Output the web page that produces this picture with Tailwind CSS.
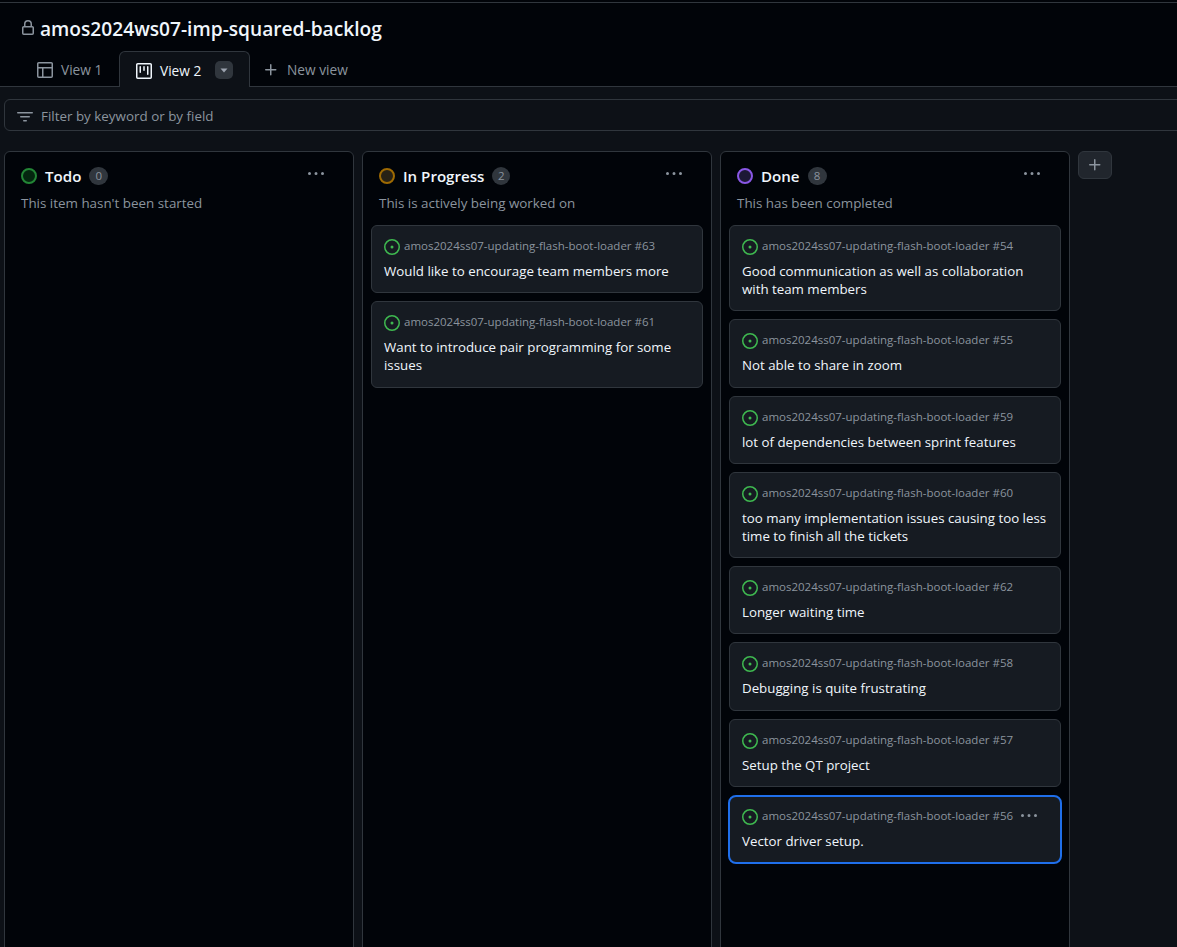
<!DOCTYPE html>
<html>
<head>
<meta charset="utf-8">
<script src="https://cdn.jsdelivr.net/npm/@tailwindcss/browser@4"></script>
</head>
<body class="m-0 bg-[#0d1117] font-['Open_Sans','Noto_Sans',sans-serif] overflow-hidden">
<div class="w-[1177px] h-[947px] overflow-hidden flex flex-col">
  <div class="bg-[#010409] h-[87px] shrink-0 flex flex-col border-b border-[#30363d] relative">
    <div class="h-[3px] shrink-0 border-b border-[#30363d] mt-0"></div>
    <div class="h-[48px] shrink-0 flex items-center pl-[20px] pt-[4px]">
      <svg width="16" height="16" viewBox="0 0 16 16" fill="#8b949e" class="mr-[4px] -mt-[2px]"><path d="M4 4a4 4 0 0 1 8 0v2h.25c.966 0 1.75.784 1.75 1.75v5.5A1.75 1.75 0 0 1 12.25 15h-8.5A1.75 1.75 0 0 1 2 13.25v-5.5C2 6.784 2.784 6 3.75 6H4Zm8.25 3.5h-8.5a.25.25 0 0 0-.25.25v5.5c0 .138.112.25.25.25h8.5a.25.25 0 0 0 .25-.25v-5.5a.25.25 0 0 0-.25-.25ZM10.5 6V4a2.5 2.5 0 1 0-5 0v2Z"/></svg>
      <h1 class="text-[19.15px] leading-[26px] font-semibold text-[#f0f6fc]">amos2024ws07-imp-squared-backlog</h1>
    </div>
    <div class="flex items-end pl-[20px] h-[35px] shrink-0">
      <div class="flex items-center h-[35px] w-[99px] pl-[17px] pt-[3px] text-[13.7px] text-[#8b949e] gap-[8px]">
        <svg width="16" height="16" viewBox="0 0 16 16" fill="#8b949e"><path d="M0 1.75C0 .784.784 0 1.75 0h12.5C15.216 0 16 .784 16 1.75v12.5A1.75 1.75 0 0 1 14.25 16H1.75A1.75 1.75 0 0 1 0 14.25ZM6.5 6.5v8h7.75a.25.25 0 0 0 .25-.25V6.5Zm8-1.5V1.75a.25.25 0 0 0-.25-.25H1.75a.25.25 0 0 0-.25.25V5Zm-13 1.5v7.75c0 .138.112.25.25.25H5v-8Z"/></svg>
        <span>View 1</span>
      </div>
      <div class="relative flex items-center h-[36px] w-[131px] -mb-[1px] pl-[16px] pt-[3px] gap-[8px] text-[13.7px] font-normal text-[#f0f6fc] bg-[#0d1117] border border-[#30363d] border-b-0 rounded-t-[6px]">
        <svg width="16" height="16" viewBox="0 0 16 16" fill="#f0f6fc"><path d="M1.75 0h12.5C15.216 0 16 .784 16 1.75v12.5A1.75 1.75 0 0 1 14.25 16H1.75A1.75 1.75 0 0 1 0 14.25V1.75C0 .784.784 0 1.75 0ZM1.5 1.75v12.5c0 .138.112.25.25.25h12.5a.25.25 0 0 0 .25-.25V1.75a.25.25 0 0 0-.25-.25H1.75a.25.25 0 0 0-.25.25ZM11.75 3a.75.75 0 0 1 .75.75v7.5a.75.75 0 0 1-1.5 0v-7.5a.75.75 0 0 1 .75-.75Zm-8.25.75a.75.75 0 0 1 1.5 0v5.5a.75.75 0 0 1-1.5 0ZM8 3a.75.75 0 0 1 .75.75v3.5a.75.75 0 0 1-1.5 0v-3.5A.75.75 0 0 1 8 3Z"/></svg>
        <span>View 2</span>
        <span class="ml-[6px] -mt-[2px] w-[18px] h-[18px] rounded-[5px] bg-[#30363d] flex items-center justify-center">
          <svg width="8" height="5" viewBox="0 0 8 5"><path d="M0.5 0.5h7L4 4.5z" fill="#9ca3af"/></svg>
        </span>
      </div>
      <div class="flex items-center h-[35px] pl-[13px] pt-[3px] gap-[8px] text-[13.7px] text-[#8b949e]">
        <svg width="16" height="16" viewBox="0 0 16 16" fill="#8b949e"><path d="M7.75 2a.75.75 0 0 1 .75.75V7h4.25a.75.75 0 0 1 0 1.5H8.5v4.25a.75.75 0 0 1-1.5 0V8.5H2.75a.75.75 0 0 1 0-1.5H7V2.75A.75.75 0 0 1 7.75 2Z"/></svg>
        <span>New view</span>
      </div>
    </div>
  </div>

  <div class="h-[64px] shrink-0 pl-[4px] pt-[12px]">
    <div class="h-[32px] w-[1190px] bg-[#0d1117] border border-[#30363d] rounded-[6px] flex items-center pl-[12px] pt-[2px] gap-[8px] text-[13.4px] text-[#8b949e]">
      <svg width="16" height="16" viewBox="0 0 16 16" fill="#8b949e" class="mt-[1px]"><path d="M.75 3h14.5a.75.75 0 0 1 0 1.5H.75a.75.75 0 0 1 0-1.5ZM3 7.75A.75.75 0 0 1 3.75 7h8.5a.75.75 0 0 1 0 1.5h-8.5A.75.75 0 0 1 3 7.75Zm3 4a.75.75 0 0 1 .75-.75h2.5a.75.75 0 0 1 0 1.5h-2.5a.75.75 0 0 1-.75-.75Z"/></svg>
      <span>Filter by keyword or by field</span>
    </div>
  </div>

  <div class="flex-1 flex gap-[8px] pl-[4px] items-start">
    <!-- Todo -->
    <section class="w-[350px] h-[820px] shrink-0 bg-[#010409] border border-[#30363d] rounded-t-[6px]">
      <header class="h-[73px] pl-[16px] pr-[16px] pt-[12px] relative">
        <div class="flex items-center h-[24px]">
          <span class="w-[16px] h-[16px] rounded-full border-2 border-[#238636] bg-[#04260f]"></span>
          <span class="ml-[8px] text-[15.1px] font-semibold text-[#f0f6fc]">Todo</span>
          <span class="ml-[8px] w-[19px] h-[18px] rounded-full bg-[#30363d] text-[11.5px] leading-[18px] text-center text-[#8b949e]">0</span>
        </div>
        <p class="mt-[5px] text-[13.4px] leading-[20px] text-[#8b949e]">This item hasn't been started</p>
        <svg class="absolute right-[29px] top-[14px]" width="16" height="16" viewBox="0 0 16 16" fill="#8b949e"><path d="M8 9a1.5 1.5 0 1 0 0-3 1.5 1.5 0 0 0 0 3ZM1.5 9a1.5 1.5 0 1 0 0-3 1.5 1.5 0 0 0 0 3Zm13 0a1.5 1.5 0 1 0 0-3 1.5 1.5 0 0 0 0 3Z"/></svg>
      </header>
    </section>

    <!-- In Progress -->
    <section class="w-[350px] h-[820px] shrink-0 bg-[#010409] border border-[#30363d] rounded-t-[6px]">
      <header class="h-[73px] pl-[16px] pr-[16px] pt-[12px] relative">
        <div class="flex items-center h-[24px]">
          <span class="w-[16px] h-[16px] rounded-full border-2 border-[#9e6a03] bg-[#272115]"></span>
          <span class="ml-[8px] text-[15.1px] font-semibold text-[#f0f6fc]">In Progress</span>
          <span class="ml-[8px] w-[18px] h-[18px] rounded-full bg-[#30363d] text-[11.5px] leading-[18px] text-center text-[#8b949e]">2</span>
        </div>
        <p class="mt-[5px] text-[13.4px] leading-[20px] text-[#8b949e]">This is actively being worked on</p>
        <svg class="absolute right-[29px] top-[14px]" width="16" height="16" viewBox="0 0 16 16" fill="#8b949e"><path d="M8 9a1.5 1.5 0 1 0 0-3 1.5 1.5 0 0 0 0 3ZM1.5 9a1.5 1.5 0 1 0 0-3 1.5 1.5 0 0 0 0 3Zm13 0a1.5 1.5 0 1 0 0-3 1.5 1.5 0 0 0 0 3Z"/></svg>
      </header>
      <div class="flex flex-col gap-[8px] px-[8px]">
        <article class="h-[68px] rounded-[6px] bg-[#161b22] border border-[#30363d] pl-[12px] pr-[8px] pt-[11px]">
          <div class="flex items-center h-[20px] gap-[4px] text-[11.5px] text-[#8b949e]">
            <svg width="16" height="16" viewBox="0 0 16 16" fill="#3fb950"><path d="M8 9.5a1.5 1.5 0 1 0 0-3 1.5 1.5 0 0 0 0 3Z"/><path d="M8 0a8 8 0 1 1 0 16A8 8 0 0 1 8 0ZM1.5 8a6.5 6.5 0 1 0 13 0 6.5 6.5 0 0 0-13 0Z"/></svg>
            <span class="-mt-[3px]">amos2024ss07-updating-flash-boot-loader #63</span>
          </div>
          <p class="mt-[5px] text-[13.3px] leading-[18px] text-[#f0f6fc]">Would like to encourage team members more</p>
        </article>
        <article class="h-[87px] rounded-[6px] bg-[#161b22] border border-[#30363d] pl-[12px] pr-[8px] pt-[11px]">
          <div class="flex items-center h-[20px] gap-[4px] text-[11.5px] text-[#8b949e]">
            <svg width="16" height="16" viewBox="0 0 16 16" fill="#3fb950"><path d="M8 9.5a1.5 1.5 0 1 0 0-3 1.5 1.5 0 0 0 0 3Z"/><path d="M8 0a8 8 0 1 1 0 16A8 8 0 0 1 8 0ZM1.5 8a6.5 6.5 0 1 0 13 0 6.5 6.5 0 0 0-13 0Z"/></svg>
            <span class="-mt-[3px]">amos2024ss07-updating-flash-boot-loader #61</span>
          </div>
          <p class="mt-[5px] text-[13.3px] leading-[18px] text-[#f0f6fc]">Want to introduce pair programming for some issues</p>
        </article>
      </div>
    </section>

    <!-- Done -->
    <section class="w-[350px] h-[820px] shrink-0 bg-[#010409] border border-[#30363d] rounded-t-[6px]">
      <header class="h-[73px] pl-[16px] pr-[16px] pt-[12px] relative">
        <div class="flex items-center h-[24px]">
          <span class="w-[16px] h-[16px] rounded-full border-2 border-[#8957e5] bg-[#1d1836]"></span>
          <span class="ml-[8px] text-[15.1px] font-semibold text-[#f0f6fc]">Done</span>
          <span class="ml-[8px] w-[19px] h-[18px] rounded-full bg-[#30363d] text-[11.5px] leading-[18px] text-center text-[#8b949e]">8</span>
        </div>
        <p class="mt-[5px] text-[13.4px] leading-[20px] text-[#8b949e]">This has been completed</p>
        <svg class="absolute right-[29px] top-[14px]" width="16" height="16" viewBox="0 0 16 16" fill="#8b949e"><path d="M8 9a1.5 1.5 0 1 0 0-3 1.5 1.5 0 0 0 0 3ZM1.5 9a1.5 1.5 0 1 0 0-3 1.5 1.5 0 0 0 0 3Zm13 0a1.5 1.5 0 1 0 0-3 1.5 1.5 0 0 0 0 3Z"/></svg>
      </header>
      <div class="flex flex-col gap-[8px] px-[8px]">
        <article class="h-[86px] rounded-[6px] bg-[#161b22] border border-[#30363d] pl-[12px] pr-[8px] pt-[11px]">
          <div class="flex items-center h-[20px] gap-[4px] text-[11.5px] text-[#8b949e]">
            <svg width="16" height="16" viewBox="0 0 16 16" fill="#3fb950"><path d="M8 9.5a1.5 1.5 0 1 0 0-3 1.5 1.5 0 0 0 0 3Z"/><path d="M8 0a8 8 0 1 1 0 16A8 8 0 0 1 8 0ZM1.5 8a6.5 6.5 0 1 0 13 0 6.5 6.5 0 0 0-13 0Z"/></svg>
            <span class="-mt-[3px]">amos2024ss07-updating-flash-boot-loader #54</span>
          </div>
          <p class="mt-[5px] text-[13.3px] leading-[18px] text-[#f0f6fc]">Good communication as well as collaboration with team members</p>
        </article>
        <article class="h-[69px] rounded-[6px] bg-[#161b22] border border-[#30363d] pl-[12px] pr-[8px] pt-[11px]">
          <div class="flex items-center h-[20px] gap-[4px] text-[11.5px] text-[#8b949e]">
            <svg width="16" height="16" viewBox="0 0 16 16" fill="#3fb950"><path d="M8 9.5a1.5 1.5 0 1 0 0-3 1.5 1.5 0 0 0 0 3Z"/><path d="M8 0a8 8 0 1 1 0 16A8 8 0 0 1 8 0ZM1.5 8a6.5 6.5 0 1 0 13 0 6.5 6.5 0 0 0-13 0Z"/></svg>
            <span class="-mt-[3px]">amos2024ss07-updating-flash-boot-loader #55</span>
          </div>
          <p class="mt-[5px] text-[13.3px] leading-[18px] text-[#f0f6fc]">Not able to share in zoom</p>
        </article>
        <article class="h-[68px] rounded-[6px] bg-[#161b22] border border-[#30363d] pl-[12px] pr-[8px] pt-[11px]">
          <div class="flex items-center h-[20px] gap-[4px] text-[11.5px] text-[#8b949e]">
            <svg width="16" height="16" viewBox="0 0 16 16" fill="#3fb950"><path d="M8 9.5a1.5 1.5 0 1 0 0-3 1.5 1.5 0 0 0 0 3Z"/><path d="M8 0a8 8 0 1 1 0 16A8 8 0 0 1 8 0ZM1.5 8a6.5 6.5 0 1 0 13 0 6.5 6.5 0 0 0-13 0Z"/></svg>
            <span class="-mt-[3px]">amos2024ss07-updating-flash-boot-loader #59</span>
          </div>
          <p class="mt-[5px] text-[13.3px] leading-[18px] text-[#f0f6fc]">lot of dependencies between sprint features</p>
        </article>
        <article class="h-[86px] rounded-[6px] bg-[#161b22] border border-[#30363d] pl-[12px] pr-[8px] pt-[11px]">
          <div class="flex items-center h-[20px] gap-[4px] text-[11.5px] text-[#8b949e]">
            <svg width="16" height="16" viewBox="0 0 16 16" fill="#3fb950"><path d="M8 9.5a1.5 1.5 0 1 0 0-3 1.5 1.5 0 0 0 0 3Z"/><path d="M8 0a8 8 0 1 1 0 16A8 8 0 0 1 8 0ZM1.5 8a6.5 6.5 0 1 0 13 0 6.5 6.5 0 0 0-13 0Z"/></svg>
            <span class="-mt-[3px]">amos2024ss07-updating-flash-boot-loader #60</span>
          </div>
          <p class="mt-[5px] text-[13.3px] leading-[18px] text-[#f0f6fc]">too many implementation issues causing too less time to finish all the tickets</p>
        </article>
        <article class="h-[68px] rounded-[6px] bg-[#161b22] border border-[#30363d] pl-[12px] pr-[8px] pt-[11px]">
          <div class="flex items-center h-[20px] gap-[4px] text-[11.5px] text-[#8b949e]">
            <svg width="16" height="16" viewBox="0 0 16 16" fill="#3fb950"><path d="M8 9.5a1.5 1.5 0 1 0 0-3 1.5 1.5 0 0 0 0 3Z"/><path d="M8 0a8 8 0 1 1 0 16A8 8 0 0 1 8 0ZM1.5 8a6.5 6.5 0 1 0 13 0 6.5 6.5 0 0 0-13 0Z"/></svg>
            <span class="-mt-[3px]">amos2024ss07-updating-flash-boot-loader #62</span>
          </div>
          <p class="mt-[5px] text-[13.3px] leading-[18px] text-[#f0f6fc]">Longer waiting time</p>
        </article>
        <article class="h-[69px] rounded-[6px] bg-[#161b22] border border-[#30363d] pl-[12px] pr-[8px] pt-[11px]">
          <div class="flex items-center h-[20px] gap-[4px] text-[11.5px] text-[#8b949e]">
            <svg width="16" height="16" viewBox="0 0 16 16" fill="#3fb950"><path d="M8 9.5a1.5 1.5 0 1 0 0-3 1.5 1.5 0 0 0 0 3Z"/><path d="M8 0a8 8 0 1 1 0 16A8 8 0 0 1 8 0ZM1.5 8a6.5 6.5 0 1 0 13 0 6.5 6.5 0 0 0-13 0Z"/></svg>
            <span class="-mt-[3px]">amos2024ss07-updating-flash-boot-loader #58</span>
          </div>
          <p class="mt-[5px] text-[13.3px] leading-[18px] text-[#f0f6fc]">Debugging is quite frustrating</p>
        </article>
        <article class="h-[68px] rounded-[6px] bg-[#161b22] border border-[#30363d] pl-[12px] pr-[8px] pt-[11px]">
          <div class="flex items-center h-[20px] gap-[4px] text-[11.5px] text-[#8b949e]">
            <svg width="16" height="16" viewBox="0 0 16 16" fill="#3fb950"><path d="M8 9.5a1.5 1.5 0 1 0 0-3 1.5 1.5 0 0 0 0 3Z"/><path d="M8 0a8 8 0 1 1 0 16A8 8 0 0 1 8 0ZM1.5 8a6.5 6.5 0 1 0 13 0 6.5 6.5 0 0 0-13 0Z"/></svg>
            <span class="-mt-[3px]">amos2024ss07-updating-flash-boot-loader #57</span>
          </div>
          <p class="mt-[5px] text-[13.3px] leading-[18px] text-[#f0f6fc]">Setup the QT project</p>
        </article>
        <article class="h-[69px] -mx-[1px] rounded-[8px] bg-[#161b22] border-2 border-[#1f6feb] pl-[12px] pr-[8px] pt-[10px]">
          <div class="flex items-center h-[20px] gap-[4px] text-[11.5px] text-[#8b949e]">
            <svg width="16" height="16" viewBox="0 0 16 16" fill="#3fb950"><path d="M8 9.5a1.5 1.5 0 1 0 0-3 1.5 1.5 0 0 0 0 3Z"/><path d="M8 0a8 8 0 1 1 0 16A8 8 0 0 1 8 0ZM1.5 8a6.5 6.5 0 1 0 13 0 6.5 6.5 0 0 0-13 0Z"/></svg>
            <span class="-mt-[3px]">amos2024ss07-updating-flash-boot-loader #56</span>
            <svg class="ml-[4px] -mt-[3px]" width="16" height="16" viewBox="0 0 16 16" fill="#8b949e"><path d="M8 9a1.5 1.5 0 1 0 0-3 1.5 1.5 0 0 0 0 3ZM1.5 9a1.5 1.5 0 1 0 0-3 1.5 1.5 0 0 0 0 3Zm13 0a1.5 1.5 0 1 0 0-3 1.5 1.5 0 0 0 0 3Z"/></svg>
          </div>
          <p class="mt-[5px] text-[13.3px] leading-[18px] text-[#f0f6fc]">Vector driver setup.</p>
        </article>
      </div>
    </section>

    <div class="w-[34px] h-[28px] shrink-0 rounded-[6px] bg-[#21262d] border border-[#30363d] flex items-center justify-center">
      <svg width="16" height="16" viewBox="0 0 16 16" fill="#8b949e"><path d="M7.75 2a.75.75 0 0 1 .75.75V7h4.25a.75.75 0 0 1 0 1.5H8.5v4.25a.75.75 0 0 1-1.5 0V8.5H2.75a.75.75 0 0 1 0-1.5H7V2.75A.75.75 0 0 1 7.75 2Z"/></svg>
    </div>
  </div>
</div>
</body>
</html>
